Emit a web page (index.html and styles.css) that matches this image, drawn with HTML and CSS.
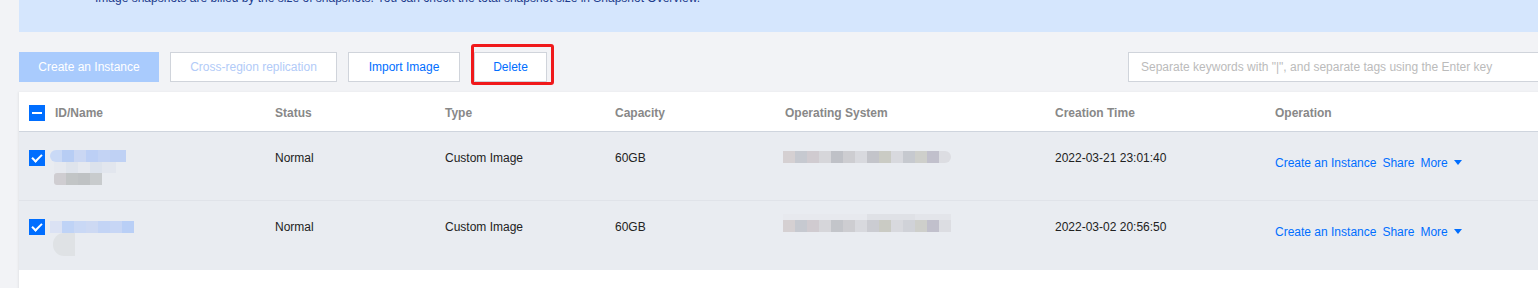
FILE: index.html
```html
<!DOCTYPE html>
<html lang="en">
<head>
<meta charset="utf-8">
<title>Images</title>
<link rel="stylesheet" href="styles.css">
</head>
<body>
<div class="page">
  <div class="banner">
    <p class="banner-text">Image snapshots are billed by the size of snapshots. You can check the total snapshot size in Snapshot Overview.</p>
  </div>

  <div class="toolbar">
    <button class="btn btn-primary-disabled">Create an Instance</button>
    <button class="btn btn-disabled">Cross-region replication</button>
    <button class="btn btn-weak">Import Image</button>
    <span class="highlight"><button class="btn btn-weak btn-delete">Delete</button></span>
    <div class="search">Separate keywords with "|", and separate tags using the Enter key</div>
  </div>

  <div class="table">
    <div class="row head">
      <div class="cell c-id"><span class="check indeterminate"></span><span>ID/Name</span></div>
      <div class="cell c-status">Status</div>
      <div class="cell c-type">Type</div>
      <div class="cell c-cap">Capacity</div>
      <div class="cell c-os">Operating System</div>
      <div class="cell c-time">Creation Time</div>
      <div class="cell c-op">Operation</div>
    </div>

    <div class="row body">
      <div class="cell c-id">
        <span class="check checked"></span>
        <div class="name">
          <span class="mosaic m-blue1"></span>
          <span class="mosaic m-pale1"></span>
          <span class="mosaic m-gray1"></span>
        </div>
      </div>
      <div class="cell c-status">Normal</div>
      <div class="cell c-type">Custom Image</div>
      <div class="cell c-cap">60GB</div>
      <div class="cell c-os"><span class="mosaic m-os"></span></div>
      <div class="cell c-time">2022-03-21 23:01:40</div>
      <div class="cell c-op">
        <a class="link">Create an Instance</a><a class="link">Share</a><a class="link more">More<span class="caret"></span></a>
      </div>
    </div>

    <div class="row body">
      <div class="cell c-id">
        <span class="check checked"></span>
        <div class="name">
          <span class="mosaic m-blue2"></span>
          <span class="mosaic m-gray2"></span>
        </div>
      </div>
      <div class="cell c-status">Normal</div>
      <div class="cell c-type">Custom Image</div>
      <div class="cell c-cap">60GB</div>
      <div class="cell c-os"><span class="mosaic m-os-top"></span><span class="mosaic m-os2"></span></div>
      <div class="cell c-time">2022-03-02 20:56:50</div>
      <div class="cell c-op">
        <a class="link">Create an Instance</a><a class="link">Share</a><a class="link more">More<span class="caret"></span></a>
      </div>
    </div>
  </div>
</div>
</body>
</html>
```

FILE: styles.css
```css
html, body {
  margin: 0;
  padding: 0;
  overflow: hidden;
  background: #f2f3f6;
}

body {
  font-family: "Liberation Sans", Arial, sans-serif;
  font-size: 12px;
  color: #222;
}

.page {
  width: 1580px;
  padding-left: 19px;
}

.banner {
  height: 32px;
  background: #d5e6fd;
  overflow: hidden;
}

.banner-text {
  margin: -9px 0 0 0;
  padding-left: 76px;
  line-height: 14px;
  color: #1c3b8c;
  white-space: nowrap;
}

.toolbar {
  display: flex;
  align-items: flex-start;
  gap: 11px;
  margin-top: 20px;
  height: 30px;
}

.btn {
  height: 30px;
  box-sizing: border-box;
  padding: 0;
  font-family: inherit;
  font-size: 12px;
  border: 1px solid #d0d4db;
  background: #fff;
  border-radius: 0;
  white-space: nowrap;
  cursor: pointer;
}

.btn-primary-disabled {
  width: 140px;
  background: #a9cbfd;
  border-color: #a9cbfd;
  color: #fff;
}

.btn-disabled {
  width: 167px;
  color: #b2cbf8;
}

.btn-weak {
  color: #006eff;
}

.btn-weak:not(.btn-delete) {
  width: 112px;
}

.btn-delete {
  width: 73px;
}

.highlight {
  display: block;
  margin-top: -8px;
  padding: 5px 4px 0 0;
  border: 3px solid #f0191b;
  border-radius: 3px;
}

.search {
  margin-left: 563px;
  flex: 0 0 440px;
  height: 30px;
  box-sizing: border-box;
  border: 1px solid #d0d4db;
  background: #fff;
  padding-left: 12px;
  line-height: 28px;
  color: #bbbbbb;
  white-space: nowrap;
  overflow: hidden;
}

.table {
  margin-top: 10px;
  background: #fff;
  box-shadow: -1px 0 2px rgba(0, 0, 0, 0.06);
  padding-bottom: 20px;
}

.row {
  display: flex;
}

.row.head {
  height: 40px;
  padding-top: 2px;
  border-bottom: 1px solid #cfd5de;
  box-sizing: border-box;
  align-items: center;
  color: #888;
  font-weight: bold;
}

.row.body {
  height: 69px;
  background: #e9ecf1;
  border-bottom: 1px solid #e0e3e9;
  box-sizing: border-box;
  align-items: flex-start;
}

.row.body + .row.body {
  border-bottom: none;
}

.cell {
  padding-left: 20px;
  box-sizing: border-box;
  line-height: 18px;
  white-space: nowrap;
}

.row.body .cell {
  padding-top: 17px;
}

.c-id { width: 236px; padding-left: 10px; display: flex; gap: 10px; align-items: flex-start; }
.row.head .c-id { align-items: center; }
.c-status { width: 170px; }
.c-type { width: 170px; }
.c-cap { width: 170px; }
.c-os { width: 270px; }
.c-time { width: 220px; }
.c-op { flex: 1; }

.row.body .c-id { padding-top: 16px; }
.row.body .c-os { padding-top: 16px; }
.row.body .c-op { padding-top: 22px; }

.check {
  width: 16px;
  height: 16px;
  flex: 0 0 16px;
  background: #006eff;
  position: relative;
}

.row.body .check { margin-top: 2px; }

.check.indeterminate::after {
  content: "";
  position: absolute;
  left: 3px;
  top: 7px;
  width: 10px;
  height: 2px;
  background: #fff;
}

.check.checked::after {
  content: "";
  position: absolute;
  left: 5px;
  top: 2px;
  width: 4px;
  height: 8px;
  border-right: 2px solid #fff;
  border-bottom: 2px solid #fff;
  transform: rotate(45deg);
}

.name {
  display: flex;
  flex-direction: column;
  margin-left: -5px;
  padding-top: 2px;
}

.mosaic {
  display: block;
}

.m-blue1 {
  width: 76px;
  height: 12px;
  border-radius: 6px 0 0 6px;
  background: linear-gradient(90deg, #c9d9f6 0 12px, #b7cdf4 12px 24px, #cad7f3 24px 36px, #bccff5 36px 48px, #c3d3f4 48px 60px, #bfd1f4 60px 76px);
}

.m-pale1 {
  width: 62px;
  height: 11px;
  margin-left: 4px;
  background: linear-gradient(90deg, #e6e9ef 0 12px, #dfe4ec 12px 24px, #e6e9ef 24px 36px, #dce2ec 36px 48px, #e2e6ee 48px 62px);
}

.m-gray1 {
  width: 48px;
  height: 12px;
  margin-left: 4px;
  border-radius: 3px 0 0 3px;
  background: linear-gradient(90deg, #cfcdd1 0 12px, #c2c5c6 12px 24px, #bfc2c4 24px 36px, #c8cbcd 36px 48px);
}

.m-blue2 {
  width: 84px;
  height: 12px;
  margin-top: 2px;
  background: linear-gradient(90deg, #dbe2f4 0 12px, #bfd3f6 12px 24px, #c9d8f5 24px 36px, #cdd9f3 36px 48px, #c3d4f5 48px 60px, #c7d6f5 60px 72px, #b9cff6 72px 84px);
}

.m-gray2 {
  width: 22px;
  height: 23px;
  margin-left: 3px;
  border-radius: 11px 0 0 11px;
  background: #dfe2e5;
}

.m-os {
  width: 168px;
  height: 12px;
  margin-top: 3px;
  margin-left: -2px;
  border-radius: 0 6px 6px 0;
  background: linear-gradient(90deg, #d5d0d2 0 12px, #c6c9d0 12px 24px, #d0cbd0 24px 36px, #d6d6da 36px 48px, #bfc1c7 48px 60px, #cdcdd1 60px 72px, #d8d9de 72px 84px, #c3c4ca 84px 96px, #cacbc4 96px 108px, #d8d9de 108px 120px, #c6c9cf 120px 132px, #cecfcb 132px 144px, #c1c0cc 144px 156px, #dcdde2 156px 168px);
}

.m-os-top {
  width: 168px;
  height: 6px;
  margin-top: -3px;
  margin-left: -2px;
  background: linear-gradient(90deg, #e7e9ee 0 84px, #dfe1e6 84px 132px, #e3e5ea 132px 168px);
}

.m-os2 {
  width: 168px;
  height: 12px;
  margin-left: -2px;
  background: linear-gradient(90deg, #d5d0d2 0 12px, #c6c9d0 12px 24px, #d0cbd0 24px 36px, #d6d6da 36px 48px, #c3c5ca 48px 60px, #cdcdd1 60px 72px, #d8d9de 72px 84px, #cbccd2 84px 96px, #cacbc4 96px 108px, #d8d9de 108px 120px, #d0d2d8 120px 132px, #cecfcb 132px 144px, #c1c0cc 144px 156px, #dcdde2 156px 168px);
}

.link {
  color: #006eff;
  cursor: pointer;
  margin-right: 6px;
}

.more {
  display: inline-flex;
  align-items: center;
}

.caret {
  display: inline-block;
  margin-left: 6px;
  margin-top: -2px;
  width: 0;
  height: 0;
  border-left: 4px solid transparent;
  border-right: 4px solid transparent;
  border-top: 5px solid #006eff;
}
```
